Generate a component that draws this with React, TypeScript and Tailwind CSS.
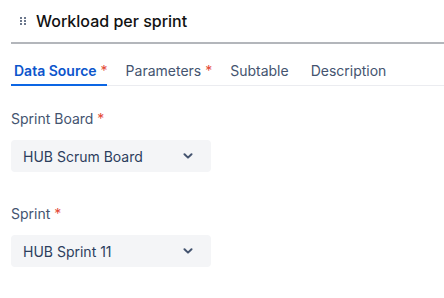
import React from "react";

const tabs = [
  { label: "Data Source", required: true, active: true },
  { label: "Parameters", required: true, active: false },
  { label: "Subtable", required: false, active: false },
  { label: "Description", required: false, active: false },
];

function DragHandle() {
  return (
    <div className="grid grid-cols-2 gap-x-[2px] gap-y-[1px]">
      {Array.from({ length: 6 }).map((_, i) => (
        <span key={i} className="w-[2px] h-[2px] bg-[#6b778c]" />
      ))}
    </div>
  );
}

function Chevron() {
  return (
    <svg width="10" height="6" viewBox="0 0 10 6" fill="none">
      <path d="M1.5 1.2 5 4.6l3.5-3.4" stroke="#44546f" strokeWidth="2" strokeLinecap="round" strokeLinejoin="round" />
    </svg>
  );
}

function Field({ label, value }: { label: string; value: string }) {
  return (
    <div className="flex flex-col">
      <label className="text-[14px] leading-[20px] text-[#44546f]">
        {label} <span className="text-[#e34935]">*</span>
      </label>
      <button className="mt-[11px] w-[200px] h-[32px] rounded-[4px] bg-[#f4f5f7] flex items-center justify-between pl-[12px] pr-[18px] text-[14px] text-[#2c3e5d]">
        <span>{value}</span>
        <Chevron />
      </button>
    </div>
  );
}

export default function App() {
  return (
    <div className="w-[444px] h-[298px] bg-white overflow-hidden font-['Inter',sans-serif] pl-[11px]">
      <div className="h-[42px] flex items-center gap-[10px] pl-[9px]">
        <DragHandle />
        <h1 className="text-[16px] font-medium text-[#111]">Workload per sprint</h1>
      </div>
      <div className="h-[2px] bg-[#b3b6bb]" />

      <div className="flex gap-[16px] border-b border-[#ebecf0]">
        {tabs.map((t) => (
          <div
            key={t.label}
            className={`-mb-px whitespace-nowrap px-[3px] pt-[17px] pb-[3px] border-b-2 text-[14px] leading-[20px] ${
              t.active
                ? "border-[#0c66e4] text-[#0c55cc] font-semibold"
                : "border-transparent text-[#44546f]"
            }`}
          >
            {t.label}
            {t.required && (
              <span className="text-[#e34935] font-normal mr-[-4px]"> *</span>
            )}
          </div>
        ))}
      </div>

      <div className="pt-[23px] flex flex-col gap-[32px]">
        <Field label="Sprint Board" value="HUB Scrum Board" />
        <Field label="Sprint" value="HUB Sprint 11" />
      </div>
    </div>
  );
}
